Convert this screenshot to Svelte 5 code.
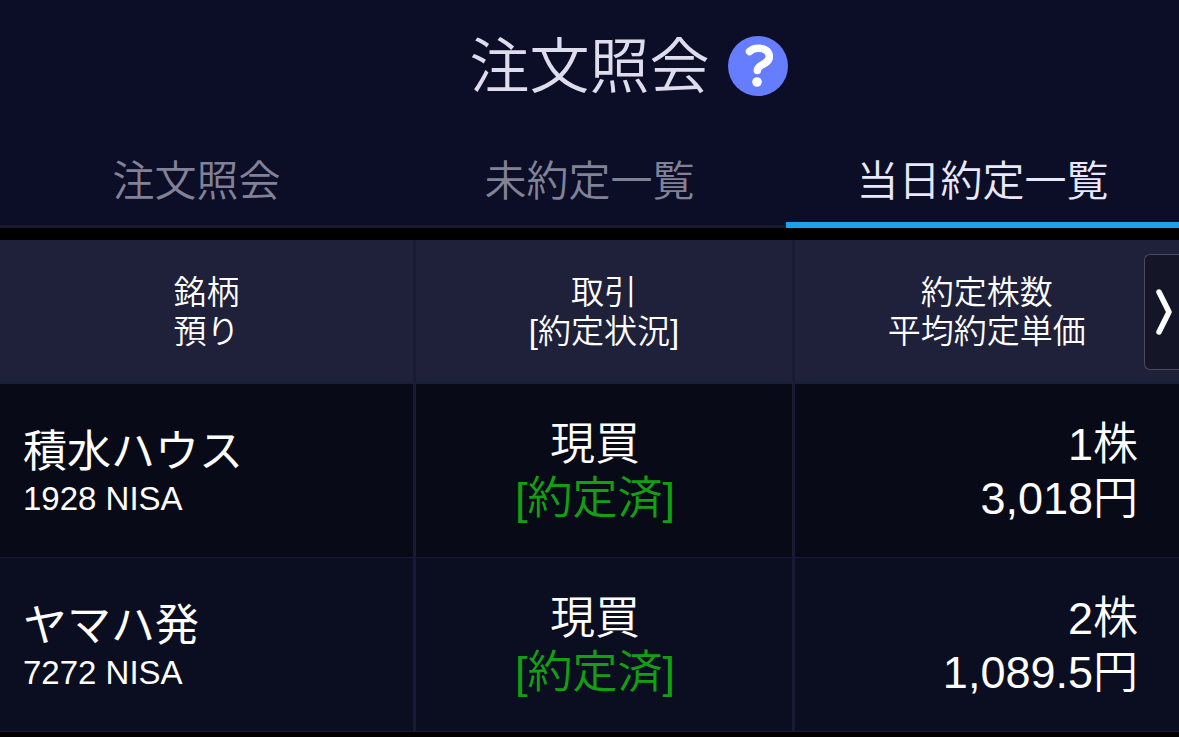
<script>
  const tabs = ['注文照会', '未約定一覧', '当日約定一覧'];
  let activeTab = $state(2);

  const columns = [
    ['銘柄', '預り'],
    ['取引', '[約定状況]'],
    ['約定株数', '平均約定単価']
  ];

  const orders = [
    { name: '積水ハウス', code: '1928 NISA', side: '現買', status: '[約定済]', shares: '1株', price: '3,018円' },
    { name: 'ヤマハ発', code: '7272 NISA', side: '現買', status: '[約定済]', shares: '2株', price: '1,089.5円' }
  ];
</script>

<header>
  <h1>注文照会</h1>
  <button class="help" aria-label="ヘルプ">
    <svg viewBox="0 0 60 60" aria-hidden="true">
      <circle cx="30" cy="30" r="30" fill="#667dff" />
      <path
        d="M21.500 15.500C24 13 27 12.300 30.500 12.300C37 12.300 41.300 15.500 41.300 20.800C41.300 29 29.300 27.500 29.300 34.500"
        fill="none"
        stroke="#fff"
        stroke-width="7.500"
        stroke-linecap="round"
      />
      <circle cx="29" cy="46" r="4.800" fill="#fff" />
    </svg>
  </button>
</header>

<nav>
  {#each tabs as tab, i}
    <button class="tab" class:active={activeTab === i} onclick={() => (activeTab = i)}>{tab}</button>
  {/each}
</nav>

<main>
  <table>
    <colgroup>
      <col class="col-stock" />
      <col class="col-trade" />
      <col />
    </colgroup>
    <thead>
      <tr>
        {#each columns as [top, bottom]}
          <th scope="col">{top}<br />{bottom}</th>
        {/each}
      </tr>
    </thead>
    <tbody>
      {#each orders as order}
        <tr>
          <td class="stock">
            <div>{order.name}</div>
            <div class="code">{order.code}</div>
          </td>
          <td class="trade">
            <div>{order.side}</div>
            <div class="status">{order.status}</div>
          </td>
          <td class="amount">
            <div>{order.shares}</div>
            <div>{order.price}</div>
          </td>
        </tr>
      {/each}
    </tbody>
  </table>

  <button class="next" aria-label="次へ">
    <svg viewBox="0 0 16 46" aria-hidden="true">
      <path d="M3 3L13 23L3 43" fill="none" stroke="#fff" stroke-width="5.500" stroke-linecap="round" stroke-linejoin="round" />
    </svg>
  </button>
</main>

<style>
  :global(body) {
    margin: 0;
    background: #000;
    color: #fff;
    font-family: 'Liberation Sans', 'Noto Sans CJK JP', sans-serif;
    font-weight: 350;
  }

  button {
    margin: 0;
    padding: 0;
    border: 0;
    background: none;
    color: inherit;
    font: inherit;
    cursor: pointer;
  }

  svg {
    display: block;
  }

  header {
    display: grid;
    grid-template-columns: 1fr auto 1fr;
    align-items: center;
    column-gap: 18px;
    height: 132px;
    background: #0c0d27;
  }

  h1 {
    grid-column: 2;
    margin: 0;
    padding-top: 4px;
    color: #dedced;
    font-size: 60px;
    font-weight: 350;
    line-height: 80px;
  }

  .help,
  .help svg {
    width: 60px;
    height: 60px;
  }

  nav {
    display: flex;
    background: #0c0d27;
  }

  .tab {
    flex: 1;
    box-sizing: border-box;
    height: 96px;
    border-bottom: 3px solid #191a30;
    padding: 10px 0 3px;
    color: #828297;
    font-size: 42px;
    line-height: 60px;
  }

  .tab.active {
    border-bottom: 6px solid #1ca2e8;
    padding-bottom: 0;
    color: #e9e8fa;
  }

  main {
    position: relative;
    margin-top: 12px;
  }

  table {
    width: 100%;
    border-collapse: separate;
    border-spacing: 0;
    table-layout: fixed;
  }

  .col-stock {
    width: 35.3%;
  }

  .col-trade {
    width: 32.1%;
  }

  th,
  td {
    box-sizing: border-box;
    border-right: 3px solid #191a34;
  }

  th:last-child,
  td:last-child {
    border-right: 0;
  }

  th {
    height: 144px;
    border-bottom: 3px solid #1b1e3a;
    padding: 3px 0 0;
    background: #1e2139;
    font-size: 33px;
    font-weight: 350;
    line-height: 39px;
  }

  td {
    height: 174px;
    border-bottom: 1px solid #191b35;
    padding: 3px 41px 0 23px;
    background: #080a18;
    font-size: 45px;
    line-height: 54px;
    white-space: nowrap;
  }

  tbody tr:nth-child(even) td {
    background: #0b0d20;
  }

  .stock {
    font-size: 44px;
    font-weight: 400;
  }

  .code {
    font-size: 33px;
    line-height: 40px;
  }

  .trade {
    text-align: center;
  }

  .status {
    color: #12a012;
  }

  .amount {
    text-align: right;
  }

  /* sits over the right edge of the header row */
  .next {
    position: absolute;
    top: 14px;
    right: 0;
    display: flex;
    align-items: center;
    box-sizing: border-box;
    width: 35px;
    height: 116px;
    border: 1px solid #4a4b5c;
    border-right: 0;
    border-radius: 6px 0 0 6px;
    padding-left: 11px;
    background: #141527;
  }

  .next svg {
    width: 16px;
    height: 46px;
  }
</style>
